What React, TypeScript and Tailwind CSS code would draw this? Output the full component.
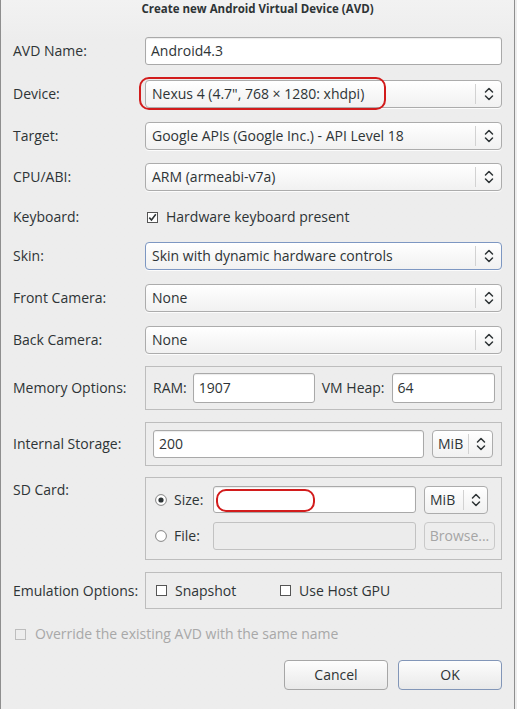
import React from "react";

const Chevrons = () => (
  <svg width="12" height="16" viewBox="0 0 12 16" fill="none">
    <path d="M2.5 6 L6 2.5 L9.5 6" stroke="#2e3436" strokeWidth="1.5" strokeLinecap="round" strokeLinejoin="round" />
    <path d="M2.5 10 L6 13.5 L9.5 10" stroke="#2e3436" strokeWidth="1.5" strokeLinecap="round" strokeLinejoin="round" />
  </svg>
);

const Combo = ({ text, focused = false, children }: { text: string; focused?: boolean; children?: React.ReactNode }) => (
  <div
    className={`relative flex h-[28px] flex-1 items-center rounded-[4px] border bg-gradient-to-b from-[#ffffff] to-[#f1f1f1] ${
      focused ? "border-[#7d97c2]" : "border-[#acacac]"
    } shadow-[0_1px_0_rgba(255,255,255,0.8)]`}
  >
    <div className="flex-1 pl-[6px] text-[#2e3436]">{text}</div>
    <div className="flex h-[20px] w-[26px] items-center justify-center border-l border-[#d2d2d2]">
      <Chevrons />
    </div>
    {children}
  </div>
);

const SmallCombo = ({ w }: { w: string }) => (
  <div className={`flex h-[28px] ${w} items-center rounded-[4px] border border-[#acacac] bg-gradient-to-b from-[#ffffff] to-[#f1f1f1]`}>
    <div className="flex-1 pl-[5px] text-[#2e3436]">MiB</div>
    <div className="flex h-[20px] w-[24px] items-center justify-center border-l border-[#d2d2d2]">
      <Chevrons />
    </div>
  </div>
);

const Input = ({ value, w, h = "h-[28px]", children }: { value?: string; w: string; h?: string; children?: React.ReactNode }) => (
  <div
    className={`relative flex ${h} ${w} items-center rounded-[3px] border border-[#a9a9a9] bg-white pl-[5px] text-[#2e3436] shadow-[inset_0_1px_1px_rgba(0,0,0,0.08)]`}
  >
    {value}
    {children}
  </div>
);

const Check = ({ checked = false, disabled = false }: { checked?: boolean; disabled?: boolean }) => (
  <svg width="11" height="11" viewBox="0 0 11 11">
    <rect x="0.5" y="0.5" width="10" height="10" fill={disabled ? "#ededed" : "#fff"} stroke={disabled ? "#bdbdbd" : "#555"} />
    {checked && <path d="M2.3 5.6 L4.5 8 L8.8 2.3" stroke="#2e3436" strokeWidth="1.6" fill="none" />}
  </svg>
);

const Radio = ({ checked = false }: { checked?: boolean }) => (
  <svg width="12" height="12" viewBox="0 0 12 12">
    <circle cx="6" cy="6" r="5.4" fill="#fff" stroke="#777" strokeWidth="0.9" />
    {checked && <circle cx="6" cy="6" r="2.6" fill="#2e3436" />}
  </svg>
);

const Label = ({ children, className = "" }: { children: React.ReactNode; className?: string }) => (
  <div className={`w-[132px] shrink-0 text-[#2e3436] ${className}`}>{children}</div>
);

export default function App() {
  return (
    <div
      className="h-[709px] w-[517px] bg-[#ededed] text-[14px] leading-none"
      style={{ fontFamily: '"Open Sans", "DejaVu Sans", sans-serif' }}
    >
      <div className="flex h-[709px] w-[515px] flex-col border-l border-r border-[#8e8e8e] bg-gradient-to-b from-[#f2f2f2] to-[#ededed] to-[40px] pl-[12px] pr-[12px]">
        <div className="flex h-[37px] justify-center pt-[3px] text-[11.5px] font-bold text-[#2e3436]">
          Create new Android Virtual Device (AVD)
        </div>

        <div className="flex h-[28px] items-center">
          <Label>AVD Name:</Label>
          <Input value="Android4.3" w="flex-1" />
        </div>

        <div className="mt-[15px] flex h-[28px] items-center">
          <Label>Device:</Label>
          <Combo text={'Nexus 4 (4.7", 768 × 1280: xhdpi)'}>
            <div className="absolute left-[-7px] top-[-4px] h-[33px] w-[247px] rounded-[10px] border-2 border-[#d21c1c]" />
          </Combo>
        </div>

        <div className="mt-[14px] flex h-[28px] items-center">
          <Label>Target:</Label>
          <Combo text="Google APIs (Google Inc.) - API Level 18" />
        </div>

        <div className="mt-[13px] flex h-[28px] items-center">
          <Label>CPU/ABI:</Label>
          <Combo text="ARM (armeabi-v7a)" />
        </div>

        <div className="mt-[12px] flex h-[28px] items-center">
          <Label>Keyboard:</Label>
          <div className="flex items-center gap-[8px] pl-[2px] text-[#2e3436]">
            <Check checked />
            <span>Hardware keyboard present</span>
          </div>
        </div>

        <div className="mt-[11px] flex h-[28px] items-center">
          <Label>Skin:</Label>
          <Combo text="Skin with dynamic hardware controls" focused />
        </div>

        <div className="mt-[14px] flex h-[28px] items-center">
          <Label>Front Camera:</Label>
          <Combo text="None" />
        </div>

        <div className="mt-[14px] flex h-[28px] items-center">
          <Label>Back Camera:</Label>
          <Combo text="None" />
        </div>

        <div className="mt-[12px] flex h-[44px] items-center">
          <Label>Memory Options:</Label>
          <div className="flex h-[44px] flex-1 items-center border border-[#bdbdbd] pl-[7px] text-[#2e3436]">
            <span className="mr-[6px]">RAM:</span>
            <Input value="1907" w="w-[122px]" h="h-[30px]" />
            <span className="ml-[7px] mr-[7px]">VM Heap:</span>
            <Input value="64" w="w-[103px]" h="h-[30px]" />
          </div>
        </div>

        <div className="mt-[12px] flex h-[44px] items-center">
          <Label>Internal Storage:</Label>
          <div className="flex h-[44px] flex-1 items-center gap-[8px] border border-[#bdbdbd] pl-[7px]">
            <Input value="200" w="w-[271px]" />
            <SmallCombo w="w-[61px]" />
          </div>
        </div>

        <div className="mt-[11px] flex h-[83px] items-start">
          <Label className="pt-[6px]">SD Card:</Label>
          <div className="flex h-[83px] flex-1 flex-col gap-[9px] border border-[#bdbdbd] pl-[9px] pt-[8px] text-[#2e3436]">
            <div className="flex h-[27px] items-center">
              <Radio checked />
              <span className="ml-[7px] w-[39px]">Size:</span>
              <Input w="w-[203px]" h="h-[27px]">
                <div className="absolute left-[2px] top-[2px] h-[23px] w-[99px] rounded-[10px] border-2 border-[#d21c1c]" />
              </Input>
              <div className="ml-[8px]">
                <SmallCombo w="w-[64px]" />
              </div>
            </div>
            <div className="flex h-[28px] items-center">
              <Radio />
              <span className="ml-[7px] w-[39px]">File:</span>
              <div className="h-[28px] w-[203px] rounded-[3px] border border-[#c2c2c2] bg-[#ececec]" />
              <div className="ml-[8px] flex h-[28px] w-[71px] items-center justify-center rounded-[4px] border border-[#c9c9c9] bg-[#ededed] text-[#a5a5a5]">
                Browse...
              </div>
            </div>
          </div>
        </div>

        <div className="mt-[12px] flex h-[37px] items-center">
          <Label>Emulation Options:</Label>
          <div className="flex h-[37px] flex-1 items-center border border-[#bdbdbd] pl-[10px] text-[#2e3436]">
            <Check />
            <span className="ml-[8px] w-[105px]">Snapshot</span>
            <Check />
            <span className="ml-[8px]">Use Host GPU</span>
          </div>
        </div>

        <div className="mt-[15px] flex h-[20px] items-center pl-[2px] text-[#a8a8a8]">
          <Check disabled />
          <span className="ml-[9px]">Override the existing AVD with the same name</span>
        </div>

        <div className="mt-[16px] flex h-[30px] justify-end gap-[10px]">
          <div className="flex h-[30px] w-[104px] items-center justify-center rounded-[4px] border border-[#a6a6a6] bg-gradient-to-b from-[#fdfdfd] to-[#e9e9e9] text-[#2e3436]">
            Cancel
          </div>
          <div className="flex h-[30px] w-[104px] items-center justify-center rounded-[4px] border border-[#8296b8] bg-gradient-to-b from-[#fdfdfd] to-[#e9e9e9] text-[#2e3436]">
            OK
          </div>
        </div>
      </div>
    </div>
  );
}
